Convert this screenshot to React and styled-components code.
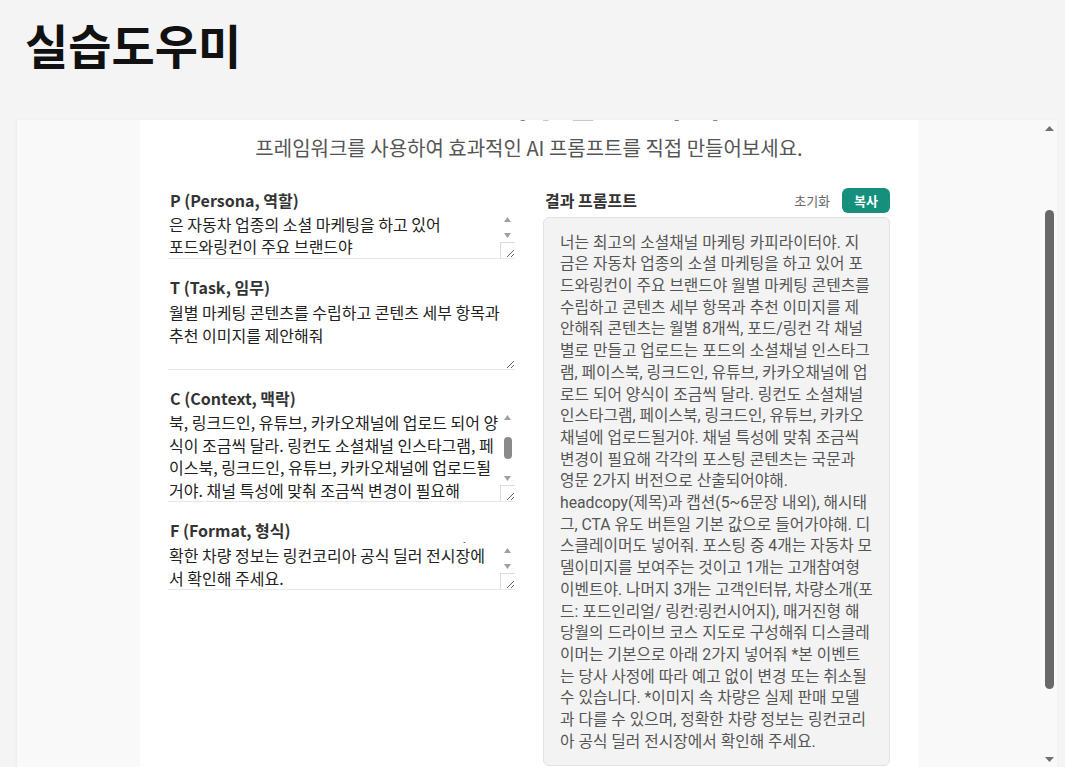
import React, { useLayoutEffect, useRef, useState } from 'react';
import styled, { createGlobalStyle } from 'styled-components';

const GlobalStyle = createGlobalStyle`
  html, body {
    margin: 0;
    height: 100%;
  }
  body {
    background: #f4f4f4;
    font-family: "Noto Sans CJK KR", "Noto Sans", sans-serif;
    color: #222;
  }
  #root {
    height: 100%;
  }
`;

const Page = styled.div`
    display: flex;
    flex-direction: column;
    height: 100vh;
`;
const TopBar = styled.header`
    flex: none;
    height: 120px;
    box-sizing: border-box;
    padding: 16px 25px 0;
`;
const AppTitle = styled.h1`
    margin: 0;
    font-size: 47px;
    line-height: 55px;
    font-weight: 700;
    color: #111;
`;
const Frame = styled.div`
    flex: 1;
    min-height: 0;
    display: flex;
    margin: 0 8px 0 17px;
    background: #f9f9f9;
    box-shadow: -1px 0 3px rgba(0, 0, 0, 0.04);
`;
const FrameBody = styled.main`
    flex: 1;
    min-width: 0;
    overflow: hidden;
    padding: 20px 0 45px;
    box-sizing: border-box;
`;

/* hand-drawn scrollbars (the headless browser hides native ones) */
const Rail = styled.div`
    flex: none;
    width: ${(p) => p.$width}px;
    display: flex;
    flex-direction: column;
    background: ${(p) => p.$bg};
`;
const TextRail = styled(Rail)`
    position: absolute;
    top: 0;
    right: 0;
    bottom: 16px;
`;
const RailArrow = styled.div`
    flex: none;
    height: 16px;
    display: flex;
    align-items: center;
    justify-content: center;
`;
const RailTrack = styled.div`
    flex: 1;
    min-height: 0;
    display: flex;
    flex-direction: column;
    align-items: center;
`;
const RailThumb = styled.div`
    flex: none;
    width: ${(p) => p.$width}px;
    border-radius: ${(p) => p.$width / 2}px;
    background: ${(p) => p.$color};
`;
const Corner = styled.div`
    position: absolute;
    right: 0;
    bottom: 1px;
    width: 14px;
    height: 15px;
    border-top: 1px solid #dcdcdc;
    border-left: 1px solid #dcdcdc;
    pointer-events: none;
`;

const Arrow = ({ up, color, w = 8 }) => (
  <svg width={w} height="5" viewBox="0 0 8 5" preserveAspectRatio="none">
    <path d={up ? 'M4 0L8 5H0z' : 'M0 0H8L4 5z'} fill={color} />
  </svg>
);

const ScrollRail = ({ as: RailKind = Rail, width, bg, thumb, thumbWidth, thumbColor, arrowColor, arrowWidth }) => (
  <RailKind $width={width} $bg={bg}>
    <RailArrow>
      <Arrow up color={arrowColor} w={arrowWidth} />
    </RailArrow>
    <RailTrack>
      {thumb && (
        <RailThumb
          $width={thumbWidth}
          $color={thumbColor}
          style={{ marginTop: thumb.top, height: thumb.h }}
        />
      )}
    </RailTrack>
    <RailArrow>
      <Arrow color={arrowColor} w={arrowWidth} />
    </RailArrow>
  </RailKind>
);

const measureThumb = (el, track, min = 18) => {
  const view = el.clientHeight;
  const full = el.scrollHeight;
  if (track <= 0 || full <= view + 1) return null;
  const h = Math.max((track * view) / full, min);
  if (h >= track) return null;
  const top = ((track - h) * el.scrollTop) / (full - view);
  return { top, h };
};

const Card = styled.section`
    width: 778px;
    margin: 0 auto;
    padding: 43px 28px 40px;
    box-sizing: border-box;
    background: #fff;
`;
const Heading = styled.h2`
    margin: 0;
    text-align: center;
    font-size: 32px;
    line-height: 1.3;
    font-weight: 700;
    color: #222;
`;
const Accent = styled.span`
    color: #138a76;
`;
const Lead = styled.p`
    margin: 9px 0 0;
    text-align: center;
    font-size: 20px;
    line-height: 28px;
    color: #555;
`;
const Columns = styled.div`
    display: grid;
    grid-template-columns: 1fr 1fr;
    gap: 28px;
    margin-top: 26px;
    align-items: start;
`;
const FieldList = styled.div`
    display: flex;
    flex-direction: column;
    gap: 16px;
`;
const Field = styled.div`
    display: flex;
    flex-direction: column;
`;
const FieldLabel = styled.label`
    font-size: 16px;
    font-weight: 700;
    line-height: 24px;
    color: #333;
    padding-left: 2px;
`;
const BoxWrap = styled.div`
    position: relative;
`;
const TextBox = styled.textarea`
    display: block;
    width: 100%;
    box-sizing: border-box;
    margin: 0;
    padding: 2px ${(p) => (p.$scrollable ? 16 : 2)}px 0 1px;
    border: none;
    border-bottom: 1px solid #e8e8e8;
    outline: none;
    resize: vertical;
    overflow: hidden;
    background: #fff;
    font-family: inherit;
    font-size: 16px;
    line-height: 22.4px;
    color: #222;
`;
const ResultHead = styled.div`
    display: flex;
    align-items: center;
    height: 25px;
    margin-bottom: 4px;
`;
const ResultTitle = styled.h3`
    flex: 1;
    margin: 0;
    padding-left: 2px;
    font-size: 16px;
    font-weight: 700;
    color: #333;
`;
const ResetButton = styled.button`
    margin-right: 12px;
    padding: 0;
    border: none;
    background: none;
    font-family: inherit;
    font-size: 13px;
    color: #666;
    cursor: pointer;
`;
const CopyButton = styled.button`
    height: 25px;
    padding: 0 12px;
    border: none;
    border-radius: 6px;
    background: #16907c;
    color: #fff;
    font-family: inherit;
    font-size: 13px;
    font-weight: 700;
    cursor: pointer;
`;
const ResultBox = styled.div`
    padding: 14px 16px 13px;
    border: 1px solid #e2e2e2;
    border-radius: 6px;
    background: #f3f3f3;
    font-family: Roboto, "Noto Sans CJK KR", sans-serif;
    font-size: 15.78px;
    line-height: 21.7px;
    color: #555;
    white-space: pre-wrap;
`;

const initial = {
  p: '너는 최고의 소셜채널 마케팅 카피라이터야. 지금은 자동차 업종의 소셜 마케팅을 하고 있어\n포드와링컨이 주요 브랜드야',
  t: '월별 마케팅 콘텐츠를 수립하고 콘텐츠 세부 항목과 추천 이미지를 제안해줘',
  c: '콘텐츠는 월별 8개씩, 포드/링컨 각 채널별로 만들고 업로드는 포드의 소셜채널 인스타그램, 페이스북, 링크드인, 유튜브, 카카오채널에 업로드 되어 양식이 조금씩 달라. 링컨도 소셜채널 인스타그램, 페이스북, 링크드인, 유튜브, 카카오채널에 업로드될거야. 채널 특성에 맞춰 조금씩 변경이 필요해\n각각의 포스팅 콘텐츠는 국문과 영문 2가지 버전으로 산출되어야해.',
  f: 'headcopy(제목)과 캡션(5~6문장 내외), 해시태그, CTA 유도 버튼일 기본 값으로 들어가야해. 디스클레이머도 넣어줘. 포스팅 중 4개는 자동차 모델이미지를 보여주는 것이고 1개는 고개참여형 이벤트야. 나머지 3개는 고객인터뷰, 차량소개(포드: 포드인리얼/ 링컨:링컨시어지), 매거진형 해당월의 드라이브 코스 지도로 구성해줘 디스클레이머는 기본으로 아래 2가지 넣어줘 *본 이벤트는 당사 사정에 따라 예고 없이 변경 또는 취소될 수 있습니다. *이미지 속 차량은 실제 판매 모델과 다를 수 있으며, 정확한 차량 정보는 링컨코리아 공식 딜러 전시장에서 확인해 주세요.',
};

const fields = [
  { key: 'p', label: 'P (Persona, 역할)', rows: 2, scroll: 'end', scrollable: true },
  { key: 't', label: 'T (Task, 임무)', rows: 3, scroll: 0, scrollable: false },
  { key: 'c', label: 'C (Context, 맥락)', rows: 4, scroll: 2, scrollable: true },
  { key: 'f', label: 'F (Format, 형식)', rows: 2, scroll: 'end', scrollable: true },
];

const flat = (s) => s.replace(/\s+/g, ' ').trim();

const TextField = ({ id, label, rows, scroll, scrollable, value, onChange }) => {
  const ref = useRef(null);
  const [thumb, setThumb] = useState(null);

  const update = () => {
    const el = ref.current;
    setThumb(measureThumb(el, el.offsetHeight - 16 - 32, 12));
  };

  useLayoutEffect(() => {
    const el = ref.current;
    el.scrollTop = scroll === 'end' ? el.scrollHeight : scroll * 22.4;
    update();
  }, []);

  return (
    <Field>
      <FieldLabel htmlFor={id}>{label}</FieldLabel>
      <BoxWrap>
        <TextBox
          id={id}
          ref={ref}
          rows={rows}
          $scrollable={scrollable}
          value={value}
          onChange={onChange}
          onScroll={update}
        />
        {scrollable && (
          <>
            <ScrollRail
              as={TextRail}
              width={15}
              bg="#fff"
              thumb={thumb}
              thumbWidth={8}
              thumbColor="#8a8a8a"
              arrowColor="#a0a0a0"
              arrowWidth={7}
            />
            <Corner />
          </>
        )}
      </BoxWrap>
    </Field>
  );
};

const App = () => {
  const [values, setValues] = useState(initial);
  const [frameThumb, setFrameThumb] = useState(null);
  const bodyRef = useRef(null);

  const updateFrame = () => {
    const el = bodyRef.current;
    setFrameThumb(measureThumb(el, el.clientHeight - 32, 30));
  };

  useLayoutEffect(() => {
    bodyRef.current.scrollTop = 100;
    updateFrame();
  }, []);

  const result = `${flat(values.p)} ${flat(values.t)} ${flat(values.c)}\n${flat(values.f)}`;

  return (
    <Page>
      <GlobalStyle />
      <TopBar>
        <AppTitle>실습도우미</AppTitle>
      </TopBar>
      <Frame>
        <FrameBody ref={bodyRef} onScroll={updateFrame}>
          <Card>
            <Heading>
              AI <Accent>프롬프트</Accent> 작성 실습 도우미
            </Heading>
            <Lead>프레임워크를 사용하여 효과적인 AI 프롬프트를 직접 만들어보세요.</Lead>
            <Columns>
              <FieldList>
                {fields.map(({ key, ...rest }) => (
                  <TextField
                    key={key}
                    id={`field-${key}`}
                    {...rest}
                    value={values[key]}
                    onChange={(e) => setValues({ ...values, [key]: e.target.value })}
                  />
                ))}
              </FieldList>
              <div>
                <ResultHead>
                  <ResultTitle>결과 프롬프트</ResultTitle>
                  <ResetButton onClick={() => setValues({ p: '', t: '', c: '', f: '' })}>초기화</ResetButton>
                  <CopyButton>복사</CopyButton>
                </ResultHead>
                <ResultBox>{result}</ResultBox>
              </div>
            </Columns>
          </Card>
        </FrameBody>
        <ScrollRail
          width={16}
          bg="#f9f9f9"
          thumb={frameThumb}
          thumbWidth={9}
          thumbColor="#686868"
          arrowColor="#707070"
          arrowWidth={9}
        />
      </Frame>
    </Page>
  );
};

export default App;
